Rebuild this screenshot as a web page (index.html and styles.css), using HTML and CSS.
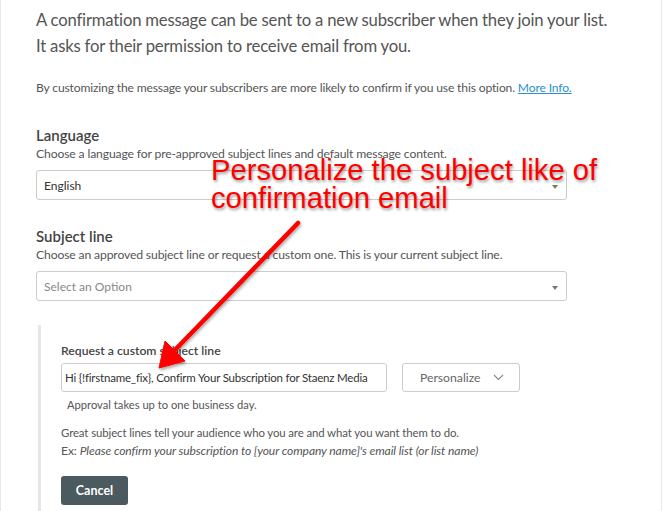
FILE: index.html
```html
<!DOCTYPE html>
<html lang="en">
<head>
	<meta charset="UTF-8">
	<title>Confirmation message</title>
	<link rel="stylesheet" href="styles.css">
</head>
<body>
	<div class="page">
		<p class="lead">A confirmation message can be sent to a new subscriber when they join your list.<br>It asks for their permission to receive email from you.</p>
		<p class="note">By customizing the message your subscribers are more likely to confirm if you use this option. <a href="#">More Info.</a></p>

		<div class="field">
			<h3>Language</h3>
			<p class="hint">Choose a language for pre-approved subject lines and default message content.</p>
			<div class="select"><span>English</span><i class="caret"></i></div>
		</div>

		<div class="field">
			<h3>Subject line</h3>
			<p class="hint">Choose an approved subject line or request a custom one. This is your current subject line.</p>
			<div class="select placeholder"><span>Select an Option</span><i class="caret"></i></div>
		</div>

		<div class="custom">
			<h4>Request a custom subject line</h4>
			<div class="row">
				<div class="input">Hi {!firstname_fix}, Confirm Your Subscription for Staenz Media</div>
				<div class="btn-personalize">Personalize
					<svg width="11" height="7" viewBox="0 0 11 7"><path d="M1 1l4.5 4.5L10 1" fill="none" stroke="#8a8a8a" stroke-width="1.2"/></svg>
				</div>
			</div>
			<p class="approval">Approval takes up to one business day.</p>
			<p class="tip">Great subject lines tell your audience who you are and what you want them to do.<br><span class="ex">Ex: <em>Please confirm your subscription to [your company name]'s email list (or list name)</em></span></p>
			<div class="btn-cancel">Cancel</div>
		</div>

		<div class="callout">Personalize the subject like of<br>confirmation email</div>
		<svg class="arrow" width="666" height="511" viewBox="0 0 666 511">
			<defs>
				<filter id="sh" x="-20%" y="-20%" width="140%" height="140%">
					<feDropShadow dx="1" dy="2" stdDeviation="1.5" flood-color="#000" flood-opacity="0.35"/>
				</filter>
			</defs>
			<g filter="url(#sh)" fill="#f00" stroke="#f00">
				<line x1="297" y1="223" x2="172" y2="352" stroke-width="4.5" stroke-linecap="round"/>
				<polygon points="158,368 164,341 184,361" stroke-width="1" stroke-linejoin="round"/>
			</g>
		</svg>
	</div>
</body>
</html>
```

FILE: styles.css
```css
html,body{margin:0;padding:0;background:#fff;}
body{font-family:Lato,"Open Sans",sans-serif;color:#4d4d4d;}
p,h3,h4{margin:0;}

.page{position:relative;width:662px;height:511px;overflow:hidden;border-left:1px solid #e8e8e8;border-right:1px solid #e8e8e8;padding:7px 0 0 35px;box-sizing:border-box;}

.lead{font-size:16.7px;line-height:26px;color:#555;letter-spacing:-0.2px;}
.note{margin-top:21px;font-size:12.1px;color:#555;letter-spacing:-0.15px;}
.note a{color:#2b8fd0;}

.field{margin-top:30px;width:531px;}
.field + .field{margin-top:26px;}
.field h3{font-size:15px;font-weight:600;color:#444;line-height:20px;}
.hint{font-size:12.2px;color:#555;line-height:18px;letter-spacing:-0.15px;}
.select{margin-top:7px;height:30px;border:1px solid #ccc;border-radius:3px;box-sizing:border-box;display:flex;align-items:center;justify-content:space-between;padding:0 8px 0 7px;font-size:12px;color:#333;}
.select.placeholder{color:#888;}
.caret{width:0;height:0;border-left:3px solid transparent;border-right:3px solid transparent;border-top:4px solid #777;margin-top:3px;}

.custom{margin-top:24px;margin-left:2px;border-left:3px solid #e6e6e6;padding:18px 0 10px 20px;}
.custom h4{font-size:12.2px;font-weight:600;color:#444;line-height:16px;}
.row{display:flex;gap:15px;margin-top:4px;}
.input{width:326px;height:29px;border:1px solid #ccc;border-radius:3px;box-sizing:border-box;padding:0 3px;font-size:11.5px;line-height:27px;color:#333;white-space:nowrap;overflow:hidden;letter-spacing:-0.2px;}
.btn-personalize{width:118px;height:29px;border:1px solid #ccc;border-radius:3px;box-sizing:border-box;display:flex;align-items:center;gap:12px;padding-left:17px;font-size:12.2px;color:#666;}
.approval{margin:5px 0 0 6px;font-size:11.2px;color:#555;line-height:16px;}
.tip{margin-top:11px;font-size:11.4px;color:#555;line-height:18px;letter-spacing:-0.1px;}
.tip .ex{font-size:12.1px;}
.btn-cancel{margin-top:16px;width:67px;height:29px;background:#4b5a5f;border-radius:3px;color:#fff;font-size:12.5px;font-weight:700;display:flex;align-items:center;justify-content:center;}

.callout{position:absolute;left:210px;top:156px;font-family:"Liberation Sans",Arial,sans-serif;font-size:29.2px;line-height:28px;color:#f00;text-shadow:1px 2px 3px rgba(0,0,0,.4);white-space:nowrap;}
.arrow{position:absolute;left:0;top:0;pointer-events:none;}
```
